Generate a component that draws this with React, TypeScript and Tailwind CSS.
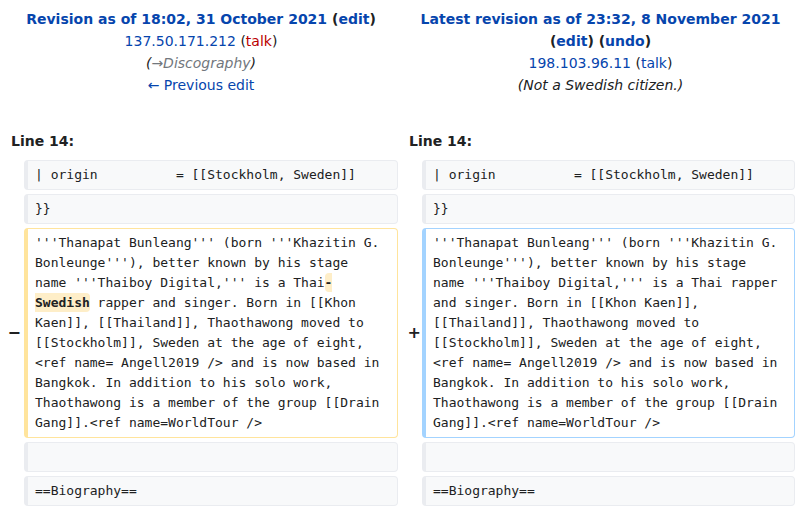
type Side = 'context' | 'deleted' | 'added' | 'empty';

interface DiffCell {
  kind: Side;
  content: React.ReactNode;
}

interface DiffRow {
  left: DiffCell;
  right: DiffCell;
}

const sans = "font-['DejaVu_Sans',_'Liberation_Sans',_sans-serif]";
const mono = "font-['DejaVu_Sans_Mono',_'Liberation_Mono',_monospace]";

const oldParagraph = (
  <>
    '''Thanapat Bunleang''' (born '''Khazitin G. Bonleunge'''), better known by his stage name '''Thaiboy Digital,''' is a Thai
    <span className="bg-[#feeec8] font-bold rounded-[4px] py-[2px]">-Swedish</span> rapper and singer. Born in [[Khon
    Kaen]], [[Thailand]], Thaothawong moved to [[Stockholm]], Sweden at the age of eight, &lt;ref name= Angell2019 /&gt; and is now based in Bangkok. In addition to his solo work, Thaothawong is a member of the group [[Drain Gang]].&lt;ref name=WorldTour /&gt;
  </>
);

const newParagraph =
  "'''Thanapat Bunleang''' (born '''Khazitin G. Bonleunge'''), better known by his stage name '''Thaiboy Digital,''' is a Thai rapper and singer. Born in [[Khon Kaen]], [[Thailand]], Thaothawong moved to [[Stockholm]], Sweden at the age of eight, <ref name= Angell2019 /> and is now based in Bangkok. In addition to his solo work, Thaothawong is a member of the group [[Drain Gang]].<ref name=WorldTour />";

const rows: DiffRow[] = [
  {
    left: { kind: 'context', content: '| origin          = [[Stockholm, Sweden]]' },
    right: { kind: 'context', content: '| origin          = [[Stockholm, Sweden]]' }
  },
  {
    left: { kind: 'context', content: '}}' },
    right: { kind: 'context', content: '}}' }
  },
  {
    left: { kind: 'deleted', content: oldParagraph },
    right: { kind: 'added', content: newParagraph }
  },
  {
    left: { kind: 'context', content: '\u00a0' },
    right: { kind: 'context', content: '\u00a0' }
  },
  {
    left: { kind: 'context', content: '==Biography==' },
    right: { kind: 'context', content: '==Biography==' }
  }
];

const cellStyle = (kind: Side) => {
  switch (kind) {
    case 'deleted':
      return 'bg-white border-[#ffe49c]';
    case 'added':
      return 'bg-white border-[#a3d3ff]';
    default:
      return 'bg-[#f8f9fa] border-[#eaecf0]';
  }
};

const Cell = ({ cell }: { cell: DiffCell }) => (
  <div
    className={`border border-solid border-l-4 rounded-[4px] pl-[7px] pr-[12px] py-1 text-[13px] leading-5 text-[#202122] whitespace-pre-wrap break-words ${mono} ${cellStyle(cell.kind)}`}
  >
    {cell.content}
  </div>
);

const Marker = ({ kind, className }: { kind: Side; className?: string }) => (
  <div className={`flex items-center justify-end text-[16px] font-bold text-[#202122] ${sans} ${className ?? ''}`}>
    {kind === 'deleted' ? '−' : kind === 'added' ? '+' : ''}
  </div>
);

const Link = ({ children, red }: { children: React.ReactNode; red?: boolean }) => (
  <a href="#" className={red ? 'text-[#ba0000]' : 'text-[#0645ad]'}>
    {children}
  </a>
);

export default function App() {
  return (
    <div className={`w-[799px] h-[510px] bg-white overflow-hidden text-[#202122] ${sans}`}>
      <div className="flex pt-2 text-[14px] leading-[22px] text-center">
        <div className="w-[402px]">
          <div className="font-bold">
            <Link>Revision as of 18:02, 31 October 2021</Link> (<Link>edit</Link>)
          </div>
          <div>
            <Link>137.50.171.212</Link> (<Link red>talk</Link>)
          </div>
          <div className="italic">
            (<span className="text-[#72777d]">→Discography</span>)
          </div>
          <div>
            <Link>← Previous edit</Link>
          </div>
        </div>
        <div className="w-[397px]">
          <div className="font-bold">
            <Link>Latest revision as of 23:32, 8 November 2021</Link> (<Link>edit</Link>) (<Link>undo</Link>)
          </div>
          <div>
            <Link>198.103.96.11</Link> (<Link>talk</Link>)
          </div>
          <div className="italic">(Not a Swedish citizen.)</div>
        </div>
      </div>

      <div className="flex mt-[34px] text-[14px] leading-[22px] font-bold">
        <div className="w-[398px] pl-[11px]">Line 14:</div>
        <div className="w-[398px] pl-[11px]">Line 14:</div>
      </div>

      <div className="grid grid-cols-[24px_374px_24px_373px] gap-y-1 mt-2">
        {rows.map((row, i) => (
          <div key={i} className="contents">
            <Marker kind={row.left.kind} className="pr-[3px]" />
            <Cell cell={row.left} />
            <Marker kind={row.right.kind} className="pr-px" />
            <Cell cell={row.right} />
          </div>
        ))}
      </div>
    </div>
  );
}
